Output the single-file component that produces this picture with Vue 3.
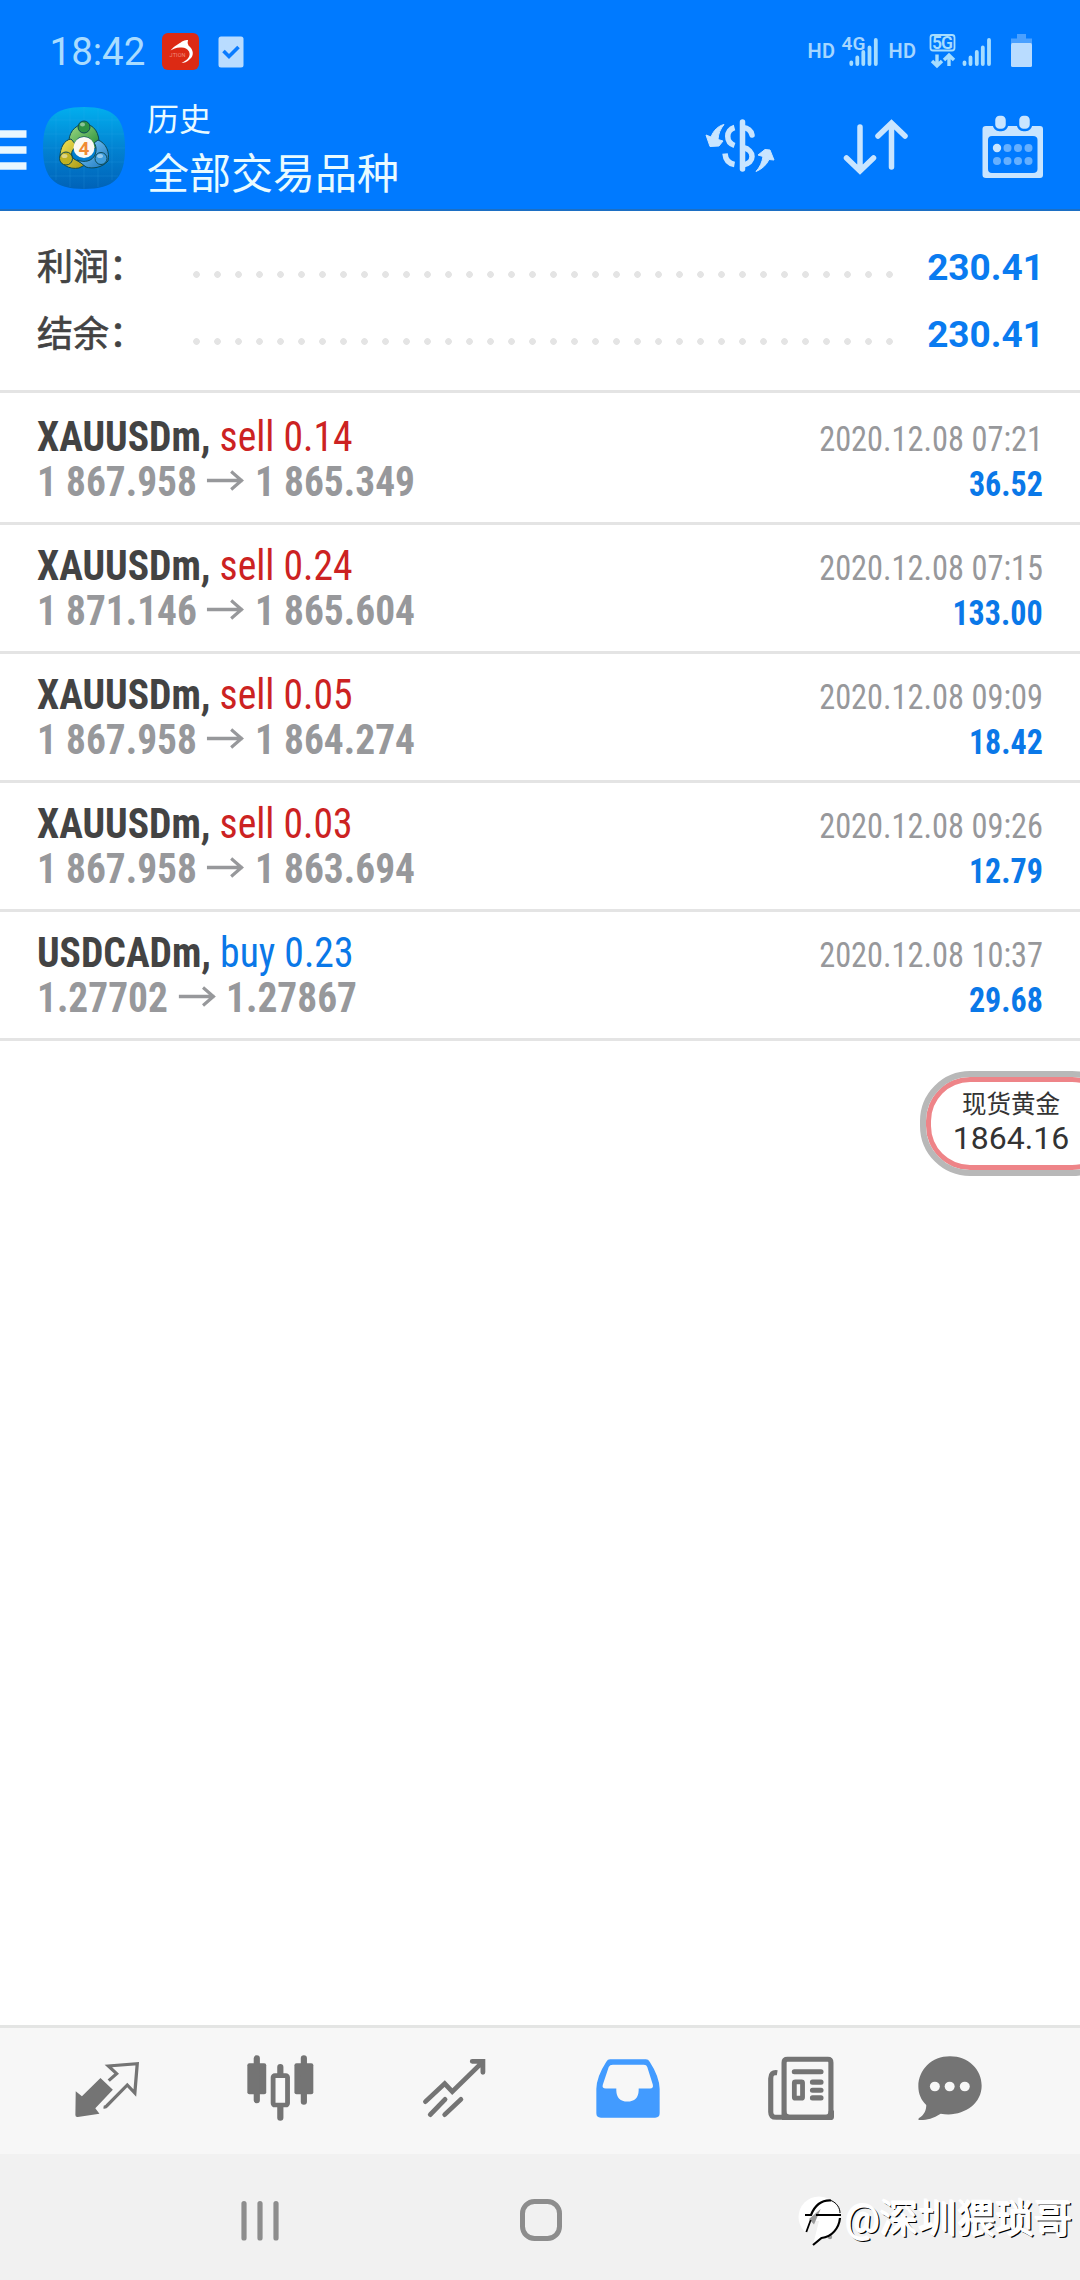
<script setup>
const summary = [
  { label: '利润：', value: '230.41' },
  { label: '结余：', value: '230.41' },
]
const deals = [
  { symbol: 'XAUUSDm,', side: 'sell', volume: '0.14', open: '1 867.958', close: '1 865.349', time: '2020.12.08 07:21', profit: '36.52' },
  { symbol: 'XAUUSDm,', side: 'sell', volume: '0.24', open: '1 871.146', close: '1 865.604', time: '2020.12.08 07:15', profit: '133.00' },
  { symbol: 'XAUUSDm,', side: 'sell', volume: '0.05', open: '1 867.958', close: '1 864.274', time: '2020.12.08 09:09', profit: '18.42' },
  { symbol: 'XAUUSDm,', side: 'sell', volume: '0.03', open: '1 867.958', close: '1 863.694', time: '2020.12.08 09:26', profit: '12.79' },
  { symbol: 'USDCADm,', side: 'buy', volume: '0.23', open: '1.27702', close: '1.27867', time: '2020.12.08 10:37', profit: '29.68' },
]
</script>

<template>
  <div class="screen">
    <header class="top">
      <div class="status">
        <span class="clock">18:42</span>
        <svg class="note-red" viewBox="0 0 37 37">
          <rect width="37" height="37" rx="6" fill="#dc2a14" />
          <path d="M8.500 17.500C12 13 17 11 20 8.500Q23 6.500 26 7Q25 10 26.500 12.500C32 17 32 23 28 26C25 29 22 30 19.500 30C26 27 29 23 27 18.500C25 15 22 14 18 14.500C14 14.500 11 16 8.500 17.500Z" fill="#fff" />
          <text x="7.500" y="24" font-size="5.500" textLength="16" fill="#f08c7c">JTION</text>
        </svg>
        <svg class="note-check" viewBox="0 0 26 32">
          <rect x="0.5" y="0.5" width="25" height="31" rx="2.5" fill="#b9dcff" />
          <path d="M5.500 15L11 20.500L20.500 11" fill="none" stroke="#0a7bff" stroke-width="3.600" />
        </svg>
        <svg class="signals" viewBox="0 0 232 40">
          <g fill="#a6d6ff">
            <text x="2.500" y="27.500" class="sig" font-size="20" textLength="27.500">HD</text>
            <text x="36.500" y="20.300" class="sig" font-size="19" textLength="24">4G</text>
            <text x="83.500" y="27.500" class="sig" font-size="20" textLength="27.500">HD</text>
          </g>
          <g fill="none" stroke="#a6ddff" stroke-width="3.800" stroke-linecap="round">
            <path d="M46.300 34V32.500M52.300 34V27.500M58.300 34V22M64.500 34V17.500M70.800 34V10" />
            <path d="M159.500 34V32.500M165.500 34V27.500M171.800 34V22M177.800 34V17.500M184 34V10" />
          </g>
          <rect x="125.500" y="5" width="24" height="15.500" rx="2.500" fill="none" stroke="#a6ddff" stroke-width="1.800" />
          <text x="127" y="19" class="sig" font-size="17.500" textLength="21" fill="#a6ddff">5G</text>
          <path d="M132 24.500V35.500M127 31L132 35.800L137 31M144 36V26M139 30L144 25.200L149 30" fill="none" stroke="#a6ddff" stroke-width="3.400" />
          <path d="M212 4H221V8.500H227V14H206V8.500H212Z" fill="#4aa0ff" />
          <rect x="206" y="13" width="21" height="24" rx="1.500" fill="#b9dcff" />
        </svg>
      </div>
      <div class="bar">
        <svg class="menu" viewBox="0 0 27 40"><path d="M0 4H26.500M0 20H26.500M0 36H26.500" stroke="#e9f7ff" stroke-width="7.300" /></svg>
        <svg class="logo" viewBox="0 0 84 84">
          <defs>
            <linearGradient id="bg" x1="0" y1="0" x2="0" y2="1"><stop offset="0" stop-color="#02aeee" /><stop offset=".5" stop-color="#0283d2" /><stop offset="1" stop-color="#0062b8" /></linearGradient>
            <linearGradient id="gr" x1="0" y1="0" x2="1" y2="1"><stop offset="0" stop-color="#a3dc86" /><stop offset="1" stop-color="#1f8a35" /></linearGradient>
            <linearGradient id="ye" x1="0" y1="0" x2="1" y2="1"><stop offset="0" stop-color="#f3e558" /><stop offset="1" stop-color="#a69612" /></linearGradient>
            <linearGradient id="bl" x1="0" y1="0" x2="1" y2="1"><stop offset="0" stop-color="#8ed6ff" /><stop offset="1" stop-color="#1573bd" /></linearGradient>
          </defs>
          <path d="M42 1C72 1 83 12 83 42S72 83 42 83S1 72 1 42S12 1 42 1Z" fill="url(#bg)" />
          <path d="M14 10V74M28 3V81M42 1V83M56 3V81M70 10V74M8 14H76M2 28H82M1 42H83M2 56H82M8 70H76" stroke="#3db0ea" stroke-opacity=".16" fill="none" />
          <g stroke="#0c4a55" stroke-width="1">
            <path d="M42 18C52 18 58 27 57 40L51 43C51 34 48 31 42 31C36 31 33 34 33 41L27 38C26 28 32 19 42 18Z" fill="url(#gr)" />
            <path d="M29 33L35 40C29 44 28 49 32 53L43 59L37 62C27 64 18 58 18 51C18 42 22 34 29 33Z" fill="url(#ye)" />
            <path d="M56 34C64 37 68 46 66 55C60 62 50 63 44 61L35 54C43 57 50 55 53 49C55 44 54 39 52 37Z" fill="url(#bl)" />
            <circle cx="42" cy="21" r="6" fill="#2f9344" />
            <circle cx="24" cy="52.500" r="6.500" fill="#c0b122" />
            <circle cx="59" cy="52.500" r="6" fill="#409ddc" />
          </g>
          <g fill="#fff" fill-opacity=".45"><ellipse cx="40.500" cy="18.500" rx="2.500" ry="2" /><ellipse cx="22.500" cy="50" rx="3" ry="2" /><ellipse cx="58" cy="50" rx="3" ry="2" /></g>
          <circle cx="42" cy="41.500" r="10.500" fill="#fbf9f4" />
          <text x="42" y="48.500" text-anchor="middle" class="four">4</text>
        </svg>
        <div class="titles">
          <div class="small">历史</div>
          <div class="big">全部交易品种</div>
        </div>
        <div class="actions">
          <svg class="a-dollar" viewBox="0 0 70 54">
            <g fill="none" stroke="#c9e5ff" stroke-width="5.500">
              <path d="M37.500 3V50" stroke-linecap="round" />
              <path d="M29.500 8.500C20.500 11 20.500 23.500 29.500 26.500M20 34.500C20.500 41 24 44.500 29.500 45.500" />
              <path d="M38 8.500C43 9 46 11.500 47 16" stroke-linecap="round" />
              <path d="M38 28.500C50 31 50 44 38 46" />
            </g>
            <path d="M19 5.500C13 7 8.500 11.500 6 18L1 16L5 27.500L14 27L18 22L13 20.500C13.500 14 15.500 10 19 5.500ZM51 52.500C57 50 61.500 46 64 40.500L69 41L65 31L60 30.500L53 36L58 37.500C57 43.500 55 48 51 52.500Z" fill="#c9e5ff" stroke="#c9e5ff" stroke-linejoin="round" />
          </svg>
          <svg class="a-sort" viewBox="0 0 66 56"><path d="M17 8V51M3.500 39L17 52L30.500 39M48.500 48V5M35 17L48.500 4L62 17" fill="none" stroke="#c9e5ff" stroke-width="5.500" stroke-linecap="round" /></svg>
          <svg class="a-cal" viewBox="0 0 62 64">
            <path fill-rule="evenodd" d="M4 11H58Q61 11 61 14V60Q61 63 58 63H4Q0.500 63 0.500 60V14Q0.500 11 4 11ZM10 21Q6 21 6 25V54Q6 58 10 58H51Q55.500 58 55.500 54V25Q55.500 21 51 21Z" fill="#c9e5ff" />
            <g fill="#c9e5ff" stroke="#007aff" stroke-width="2.500"><rect x="12" y="-.5" width="13" height="15.500" rx="5.500" /><rect x="36" y="-.5" width="13" height="15.500" rx="5.500" /></g>
            <g fill="#66b0ff"><circle cx="15" cy="33" r="4.200" fill="#c9e5ff" /><circle cx="25.500" cy="33" r="4" /><circle cx="36" cy="33" r="4" /><circle cx="46.500" cy="33" r="4" /><circle cx="15" cy="46" r="4" /><circle cx="25.500" cy="46" r="4" /><circle cx="36" cy="46" r="4" /><circle cx="46.500" cy="46" r="4" /></g>
          </svg>
        </div>
      </div>
    </header>

    <main class="content">
      <section class="summary">
        <div v-for="s in summary" :key="s.label" class="sum-row">
          <span class="label">{{ s.label }}</span>
          <span class="dots"></span>
          <span class="value">{{ s.value }}</span>
        </div>
      </section>
      <section class="deals">
        <article v-for="d in deals" :key="d.time" class="deal">
          <div class="line">
            <div class="title"><b>{{ d.symbol }}</b> <span :class="d.side">{{ d.side }} {{ d.volume }}</span></div>
            <div class="time">{{ d.time }}</div>
          </div>
          <div class="line">
            <div class="prices">
              <span>{{ d.open }}</span>
              <svg viewBox="0 0 40 21" preserveAspectRatio="none"><path d="M0 10.500H38M26 1.500L37 10.500L26 19.500" fill="none" stroke="#97989b" stroke-width="3.400" /></svg>
              <span>{{ d.close }}</span>
            </div>
            <div class="profit">{{ d.profit }}</div>
          </div>
        </article>
      </section>
      <aside class="quote">
        <div class="quote-name">现货黄金</div>
        <div class="quote-price">1864.16</div>
      </aside>
    </main>

    <nav class="tabs">
      <div class="tab"><svg class="tab-quotes" width="66" height="58" preserveAspectRatio="none" viewBox="217 152 192 174">
        <path d="M222 243L240 258L294 203L330 238L279 294L291 310L228 320Q221 321 221 314Z" fill="#747474" />
        <path d="M318 211L341 190L317 167L401 160L394 248L372 224L313 286Q309 291 303 290" fill="none" stroke="#747474" stroke-width="9.500" />
      </svg></div>
      <div class="tab"><svg width="67" height="66" preserveAspectRatio="none" viewBox="716 137 195 198">
        <g fill="#747474"><rect x="717" y="162" width="55" height="93" rx="6" /><rect x="854" y="162" width="55" height="93" rx="6" /></g>
        <path d="M744.500 147V273M881.500 147V277M813 173V195M813 290V325" stroke="#747474" stroke-width="18" stroke-linecap="round" />
        <rect x="792" y="199" width="42" height="88" rx="5" fill="none" stroke="#747474" stroke-width="14" />
      </svg></div>
      <div class="tab"><svg width="64" height="60" preserveAspectRatio="none" viewBox="1222 144 186 180">
        <path d="M1232 275L1288 221L1310 245L1397 157M1368 154H1399V187M1246 314L1289 268M1288 314L1335 268" fill="none" stroke="#747474" stroke-width="14" stroke-linecap="round" />
      </svg></div>
      <div class="tab"><svg width="64" height="59" preserveAspectRatio="none" viewBox="161 146 186 176">
        <path fill-rule="evenodd" d="M202 147H306Q313 147 317 154Q345 198 346 235V308Q346 321 333 321H175Q162 321 162 308V235Q163 198 191 154Q195 147 202 147ZM210 163H300Q308 163 310 170L326 222Q329 234 318 234H285V240Q284 273 252 273Q221 273 220 240V234H190Q177 234 181 222L198 170Q201 163 210 163Z" fill="#429bff" />
      </svg></div>
      <div class="tab"><svg width="66" height="65" preserveAspectRatio="none" viewBox="663 137 193 194">
        <path d="M690 187Q671 184 671 204V304Q671 320 687 320H847M710 320V157Q710 147 720 147H838Q847 147 847 157V320" fill="none" stroke="#747474" stroke-width="15" />
        <path d="M704 300V328H846Q856 328 856 318V300L840 302Q840 312 832 312H726Q716 312 716 300Z" fill="#747474" />
        <path d="M740 184H818M793 215H818M793 239H818M793 262H818" stroke="#747474" stroke-width="15" stroke-linecap="round" />
        <rect x="740" y="214" width="24" height="49" rx="3" fill="none" stroke="#747474" stroke-width="14" />
      </svg></div>
      <div class="tab last"><svg width="64" height="65" preserveAspectRatio="none" viewBox="1101 137 186 194">
        <path d="M1194 138C1248 138 1286 178 1286 226C1286 284 1226 321 1167 309C1144 324 1124 329 1104 328Q1100 326 1104 322C1121 311 1125 297 1125 283C1110 269 1102 249 1102 228C1102 178 1141 138 1194 138Z" fill="#747474" />
        <g fill="#f7f7f7"><circle cx="1150" cy="228" r="14.500" /><circle cx="1193" cy="228" r="14.500" /><circle cx="1237" cy="228" r="14.500" /></g>
      </svg></div>
    </nav>

    <footer class="sysnav">
      <svg class="recents" viewBox="0 0 40 42"><path d="M4 3.500V38M20 3.500V38M36 3.500V38" stroke="#8d8d8d" stroke-width="5.200" stroke-linecap="round" /></svg>
      <svg class="home" viewBox="0 0 44 44"><rect x="3.500" y="3.500" width="37" height="37" rx="12" fill="none" stroke="#8d8d8d" stroke-width="5" /></svg>
      <div class="mark">
        <svg class="mark-logo" viewBox="0 0 44 52">
          <circle cx="21" cy="22" r="20.500" fill="#fff" />
          <path d="M13 26L22 26L16 48L6 40Z" fill="#f1f1f1" />
          <path d="M22 22L15 50L24 42Z" fill="#fff" />
          <path d="M22.700 14L11 24L16 29.500Z" fill="#999" />
          <circle cx="32" cy="42" r="2.200" fill="#999" />
          <g fill="none" stroke="#000">
            <path d="M7 20H13C17 10 23 5 33 5.500" stroke-width="2.200" />
            <path d="M33 5.500C39 8 42 13 42 18" stroke-width="1" />
            <path d="M18 20H43M12.700 25L8.300 37" stroke-width="1.800" />
            <path d="M42 23C41 33 34 42 23.500 43L15 50" stroke-width="2.200" />
          </g>
        </svg>
        <span>@深圳猥琐哥</span>
      </div>
    </footer>
  </div>
</template>

<style>
body { margin: 0; }
</style>

<style scoped>
.screen { width: 1080px; height: 2280px; display: flex; flex-direction: column; background: #fff; font-family: Roboto, "Noto Sans CJK SC", sans-serif; overflow: hidden; }
.screen svg { display: block; flex: none; }
.top { height: 211px; box-sizing: border-box; background: #007aff; border-bottom: 2px solid #1c6fc4; display: flex; flex-direction: column; }
.status { height: 103px; display: flex; align-items: flex-start; padding-left: 49.500px; }
.clock { width: 112.500px; font-size: 38.500px; line-height: 46px; margin-top: 29px; color: #a9dcff; }
.note-red { width: 37px; height: 37px; margin-top: 33px; }
.note-check { width: 26px; height: 32px; margin: 36px 0 0 19px; }
.signals { width: 232px; height: 40px; margin: 30px 0 0 561px; }
.sig { font-family: Roboto, sans-serif; font-weight: 600; }
.bar { display: flex; height: 106px; }
.menu { width: 27px; height: 40px; margin-top: 27px; }
.logo { width: 84px; height: 84px; margin: 3px 0 0 15px; }
.four { font: bold 19px Roboto, sans-serif; fill: #f08a33; }
.titles { margin-left: 21px; width: 480px; color: #e9fbff; white-space: nowrap; }
.small { font-size: 32px; line-height: 34px; }
.big { font-size: 42px; line-height: 46px; margin-top: 15px; }
.actions { display: flex; }
.a-dollar { width: 70px; height: 54px; margin: 16px 0 0 78px; }
.a-sort { width: 66px; height: 56px; margin: 16px 0 0 68px; }
.a-cal { width: 62px; height: 64px; margin: 12px 0 0 73px; }
.content { flex: 1; position: relative; }
.summary { height: 182px; box-sizing: border-box; border-bottom: 3px solid #e4e4e4; padding: 23px 36px 0 37px; }
.sum-row { height: 67px; display: flex; align-items: baseline; line-height: 67px; }
.label { width: 149px; font-size: 36px; color: #434343; -webkit-text-stroke: 0.7px #434343; }
.dots { width: 714px; height: 7px; margin-bottom: 2px; transform: translateY(-2px); background: radial-gradient(circle at 10.5px 3.5px, #e4e4e4 3px, transparent 3.700px) 0 0 / 21px 7px; }
.value { margin-left: auto; font-size: 37px; font-weight: 700; color: #0a7bf0; }
.deals { padding-top: 3px; }
.deal { height: 129px; box-sizing: border-box; border-bottom: 3px solid #e4e4e4; padding: 18px 37px 0 37px; }
.line { height: 45px; display: flex; justify-content: space-between; align-items: baseline; line-height: 45px; font-family: "Roboto Condensed", Roboto, sans-serif; font-stretch: 75%; white-space: nowrap; }
.title { font-size: 42px; color: #434343; transform: scaleX(0.943); transform-origin: left; }
.sell { color: #cc2222; }
.buy { color: #0a78e8; }
.prices { display: flex; align-items: baseline; gap: 11px; font-size: 42px; font-weight: 700; color: #97989b; transform: scaleX(0.938); transform-origin: left; }
.prices svg { width: 40px; height: 21px; transform: translateY(-5px); }
.time { font-size: 35px; color: #97989b; transform: scaleX(0.925); transform-origin: right; }
.profit { font-size: 35px; font-weight: 700; color: #0a78e8; transform: scaleX(0.915); transform-origin: right; }
.quote { position: absolute; left: 920px; top: 860px; width: 202px; height: 105px; box-sizing: border-box; border: 6px solid #b8b8b8; border-radius: 50px; box-shadow: inset 0 0 0 5px #ee8488; padding-right: 20px; text-align: center; color: #333; white-space: nowrap; }
.quote-name { font-size: 24.500px; line-height: 30px; margin-top: 13px; }
.quote-price { font-size: 32px; line-height: 38px; margin-top: -1px; }
.tabs { height: 129px; box-sizing: border-box; border-top: 3px solid #e4e5e4; background: #f7f7f7; display: flex; padding-left: 20px; }
.tab { width: 173.600px; height: 120px; display: flex; justify-content: center; align-items: center; }
.tab-quotes { margin-top: 3px; }
.tab.last { width: 125px; }
.sysnav { height: 126px; background: #f1f1f1; display: flex; align-items: flex-start; }
.recents { width: 40px; height: 42px; margin: 46px 0 0 240px; }
.home { width: 44px; height: 44px; margin: 44px 0 0 239px; }
.mark { display: flex; margin: 41px 0 0 235px; white-space: nowrap; }
.mark-logo { width: 44px; height: 52px; }
.mark span { font-size: 38.500px; line-height: 48px; margin-left: 3px; color: #fff; text-shadow: 0.8px 0.8px 0 #fff, -1px -1px 0 #fff, 2px 2px 0 #000; }
</style>
